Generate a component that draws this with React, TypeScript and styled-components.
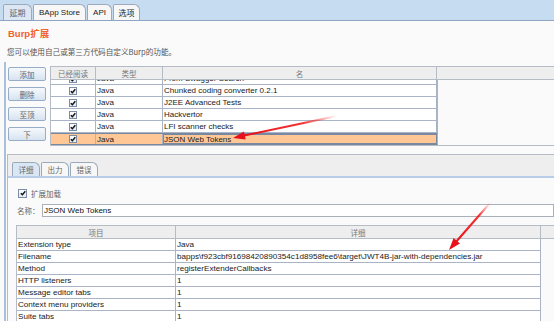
import styled, {createGlobalStyle} from "styled-components";

const GlobalStyle = createGlobalStyle`
    html, body {
        margin: 0;
        padding: 0;
        background: #fafafa;
    }
    body {
        font-family: "Liberation Sans", "Noto Sans CJK SC", sans-serif;
        color: #222;
    }
`

const cjk = `"Noto Sans CJK SC", "Liberation Sans", sans-serif`

const Page = styled.div`
    position: relative;
    width: 554px;
    height: 321px;
    overflow: hidden;
    background: #fafafa;
`

const TopTabBar = styled.div`
    height: 20px;
    display: flex;
    align-items: flex-end;
    padding-left: 3px;
    gap: 1px;
    background: #c6dcf1;
    border-bottom: 1px solid #8ea6c4;
`

const TopTab = styled.div<{ $active?: boolean; $w: number }>`
    width: ${p => p.$w}px;
    height: 16px;
    box-sizing: border-box;
    display: flex;
    align-items: center;
    justify-content: center;
    font-size: 8px;
    font-family: "Liberation Sans", "Noto Sans CJK SC", sans-serif;
    color: ${p => p.$active ? "#556677" : "#222"};
    background: ${p => p.$active ? "#dce7f3" : "#f7f7f7"};
    border: 1px solid #9aaabb;
    border-bottom: none;
    border-radius: 2px 6px 0 0;
`

const Title = styled.div`
    margin: 6px 0 0 8px;
    height: 14px;
    line-height: 14px;
    font-size: 9.5px;
    font-weight: bold;
    color: #f2602e;
    font-family: "Liberation Sans", "Noto Sans CJK SC", sans-serif;
`

const Description = styled.div`
    margin: 4px 0 0 7px;
    height: 14px;
    line-height: 14px;
    font-size: 7.6px;
    color: #555;
    font-family: ${cjk};
`

const SplitPane = styled.div`
    margin-top: 3px;
    margin-left: 4px;
    border-left: 2px solid #a9c0dc;
    height: 260px;
`

const UpperSection = styled.div`
    display: flex;
    gap: 4px;
    padding: 4px 0 0 2px;
`

const ButtonColumn = styled.div`
    display: flex;
    flex-direction: column;
    gap: 6px;
    margin-top: 1px;
    width: 38px;
`

const SideButton = styled.div`
    height: 14px;
    box-sizing: border-box;
    display: flex;
    align-items: center;
    justify-content: center;
    font-size: 7.5px;
    color: #666;
    font-family: ${cjk};
    border: 1px solid #97acc6;
    border-radius: 2px;
    background: linear-gradient(#f6f9fc, #d7e3f0);
`

const Viewport = styled.div`
    flex: 1;
    border-top: 1px solid #b5bcc6;
    border-left: 1px solid #b5bcc6;
    border-bottom: 1px solid #b5bcc6;
    background: #fafafa;
`

const ExtHeader = styled.div`
    display: grid;
    grid-template-columns: 45px 67px 274px 1fr;
    height: 12px;
    background: #eeeeee;
    border-bottom: 1px solid #b5bcc6;
`

const HeaderCell = styled.div<{ $last?: boolean }>`
    display: flex;
    align-items: center;
    justify-content: center;
    font-size: 7.5px;
    color: #777;
    font-family: ${cjk};
    border-right: ${p => p.$last ? "none" : "1px solid #b5bcc6"};
    overflow: hidden;
`

const ExtBody = styled.div`
    height: 65px;
    overflow: hidden;
`

const ExtRows = styled.div`
    margin-top: -7px;
    width: 387px;
`

const ExtRow = styled.div<{ $selected?: boolean }>`
    display: grid;
    grid-template-columns: 45px 67px 274px;
    height: 12px;
    box-sizing: border-box;
    background: ${p => p.$selected ? "#ffc696" : "#fff"};
    border-bottom: 1px solid ${p => p.$selected ? "#7888a0" : "#a9b5c6"};
    border-top: ${p => p.$selected ? "1px solid #7888a0" : "none"};
    border-right: 1px solid #a9b5c6;
`

const Cell = styled.div<{ $center?: boolean; $boxed?: boolean }>`
    display: flex;
    align-items: center;
    justify-content: ${p => p.$center ? "center" : "flex-start"};
    padding-left: ${p => p.$center ? 0 : 1}px;
    font-size: 8px;
    color: #1a1a1a;
    white-space: nowrap;
    overflow: hidden;
    border-right: 1px solid #a9b5c6;
    box-sizing: border-box;
    outline: ${p => p.$boxed ? "1px solid #7888a0" : "none"};
    outline-offset: -1px;
`

const Check = styled.span<{ $size: number }>`
    width: ${p => p.$size}px;
    height: ${p => p.$size}px;
    box-sizing: border-box;
    border: 1px solid #7c8ea6;
    background: linear-gradient(#fdfdfd, #e2eaf3);
    display: inline-flex;
    align-items: center;
    justify-content: center;
    flex-shrink: 0;
`

const LowerBox = styled.div`
    margin: 8px 0 0 1px;
    border-top: 1px solid #b5bcc6;
    border-left: 1px solid #b5bcc6;
    background: #eeeeee;
    height: 200px;
`

const SubTabBar = styled.div`
    display: flex;
    align-items: flex-end;
    height: 21px;
    padding-left: 4px;
    gap: 1px;
    border-bottom: 2px solid #b9cde8;
`

const SubTab = styled.div<{ $active?: boolean }>`
    width: 28px;
    height: 14px;
    box-sizing: border-box;
    display: flex;
    align-items: center;
    justify-content: center;
    font-size: 7.5px;
    color: #666;
    font-family: ${cjk};
    background: ${p => p.$active ? "#d9e6f4" : "#f7f7f7"};
    border: 1px solid #9aaabb;
    border-bottom: none;
    border-radius: 2px 6px 0 0;
`

const DetailPanel = styled.div`
    background: #fafafa;
    padding: 10px 0 0 8px;
    height: 170px;
`

const CheckRow = styled.div`
    display: flex;
    align-items: center;
    gap: 4px;
    height: 10px;
    margin-left: 2px;
    font-size: 7.5px;
    color: #666;
    font-family: ${cjk};
`

const NameRow = styled.div`
    display: flex;
    align-items: center;
    margin-top: 6px;
    gap: 1px;
    margin-left: 1px;
`

const NameLabel = styled.span`
    font-size: 7.5px;
    color: #666;
    font-family: ${cjk};
    width: 24px;
`

const NameInput = styled.div`
    flex: 1;
    height: 13px;
    box-sizing: border-box;
    border: 1px solid #a9b0ba;
    background: #fff;
    display: flex;
    align-items: center;
    padding-left: 1px;
    font-size: 8px;
    color: #111;
`

const DetailTable = styled.div`
    margin-top: 8px;
    border-top: 1px solid #b5bcc6;
    border-left: 1px solid #b5bcc6;
`

const DetailHeader = styled.div`
    display: grid;
    grid-template-columns: 159px 365px 1fr;
    height: 12px;
    background: #eeeeee;
    border-bottom: 1px solid #b5bcc6;
`

const DetailRow = styled.div`
    display: grid;
    grid-template-columns: 159px 365px;
    height: 12px;
    box-sizing: border-box;
`

const DetailCell = styled.div`
    display: flex;
    align-items: center;
    padding-left: 1px;
    font-size: 8.1px;
    color: #1a1a1a;
    white-space: nowrap;
    overflow: hidden;
    background: #fff;
    border-right: 1px solid #a9b5c6;
    border-bottom: 1px solid #a9b5c6;
`

const Overlay = styled.svg`
    position: absolute;
    left: 0;
    top: 0;
    pointer-events: none;
`

const CheckMark = () => (
    <svg width="6" height="6" viewBox="0 0 6 6">
        <path d="M0.8 3.2 L2.4 4.8 L5.3 1.2" fill="none" stroke="#111" strokeWidth="1.4"/>
    </svg>
)

const extensions = [
    {type: "Java", name: "From Swagger Search"},
    {type: "Java", name: "Chunked coding converter 0.2.1"},
    {type: "Java", name: "J2EE Advanced Tests"},
    {type: "Java", name: "Hackvertor"},
    {type: "Java", name: "LFI scanner checks"},
    {type: "Java", name: "JSON Web Tokens", selected: true},
]

const details = [
    ["Extension type", "Java"],
    ["Filename", "bapps\\f923cbf91698420890354c1d8958fee6\\target\\JWT4B-jar-with-dependencies.jar"],
    ["Method", "registerExtenderCallbacks"],
    ["HTTP listeners", "1"],
    ["Message editor tabs", "1"],
    ["Context menu providers", "1"],
    ["Suite tabs", "1"],
]

export default function App() {
    return <>
        <GlobalStyle/>
        <Page>
            <TopTabBar>
                <TopTab $active $w={29}>延期</TopTab>
                <TopTab $w={53}>BApp Store</TopTab>
                <TopTab $w={25}>API</TopTab>
                <TopTab $w={27}>选项</TopTab>
            </TopTabBar>

            <Title>Burp扩展</Title>
            <Description>您可以使用自己或第三方代码自定义Burp的功能。</Description>

            <SplitPane>
                <UpperSection>
                    <ButtonColumn>
                        <SideButton>添加</SideButton>
                        <SideButton>删除</SideButton>
                        <SideButton>至顶</SideButton>
                        <SideButton>下</SideButton>
                    </ButtonColumn>

                    <Viewport>
                        <ExtHeader>
                            <HeaderCell>已经阅读</HeaderCell>
                            <HeaderCell>类型</HeaderCell>
                            <HeaderCell>名</HeaderCell>
                            <HeaderCell $last/>
                        </ExtHeader>
                        <ExtBody>
                            <ExtRows>
                                {extensions.map(ext =>
                                    <ExtRow key={ext.name} $selected={ext.selected}>
                                        <Cell $center><Check $size={8}><CheckMark/></Check></Cell>
                                        <Cell>{ext.type}</Cell>
                                        <Cell $boxed={ext.selected}>{ext.name}</Cell>
                                    </ExtRow>
                                )}
                            </ExtRows>
                        </ExtBody>
                    </Viewport>
                </UpperSection>

                <LowerBox>
                    <SubTabBar>
                        <SubTab $active>详细</SubTab>
                        <SubTab>出力</SubTab>
                        <SubTab>错误</SubTab>
                    </SubTabBar>
                    <DetailPanel>
                        <CheckRow>
                            <Check $size={9}><CheckMark/></Check>
                            扩展加载
                        </CheckRow>
                        <NameRow>
                            <NameLabel>名称：</NameLabel>
                            <NameInput>JSON Web Tokens</NameInput>
                        </NameRow>
                        <DetailTable>
                            <DetailHeader>
                                <HeaderCell>项目</HeaderCell>
                                <HeaderCell>详细</HeaderCell>
                                <HeaderCell $last/>
                            </DetailHeader>
                            {details.map(([key, value]) =>
                                <DetailRow key={key}>
                                    <DetailCell>{key}</DetailCell>
                                    <DetailCell>{value}</DetailCell>
                                </DetailRow>
                            )}
                        </DetailTable>
                    </DetailPanel>
                </LowerBox>
            </SplitPane>

            <Overlay width="554" height="321" viewBox="0 0 554 321">
                <defs>
                    <linearGradient id="fade1" gradientUnits="userSpaceOnUse" x1="337" y1="116" x2="240" y2="136">
                        <stop offset="0" stopColor="#ff2a2a" stopOpacity="0"/>
                        <stop offset="0.35" stopColor="#f01c1c" stopOpacity="0.9"/>
                        <stop offset="1" stopColor="#e8101a"/>
                    </linearGradient>
                    <linearGradient id="fade2" gradientUnits="userSpaceOnUse" x1="490" y1="203" x2="454" y2="245">
                        <stop offset="0" stopColor="#ff2a2a" stopOpacity="0"/>
                        <stop offset="0.3" stopColor="#f01c1c" stopOpacity="0.9"/>
                        <stop offset="1" stopColor="#e8101a"/>
                    </linearGradient>
                </defs>
                <line x1="337" y1="116" x2="242" y2="136" stroke="url(#fade1)" strokeWidth="2"/>
                <polygon points="233,138 244,131.4 245.6,139.6" fill="#e8101a"/>
                <line x1="490" y1="203" x2="455" y2="243" stroke="url(#fade2)" strokeWidth="2"/>
                <polygon points="449,250 460,243.6 453.6,238" fill="#e8101a"/>
            </Overlay>
        </Page>
    </>
}
